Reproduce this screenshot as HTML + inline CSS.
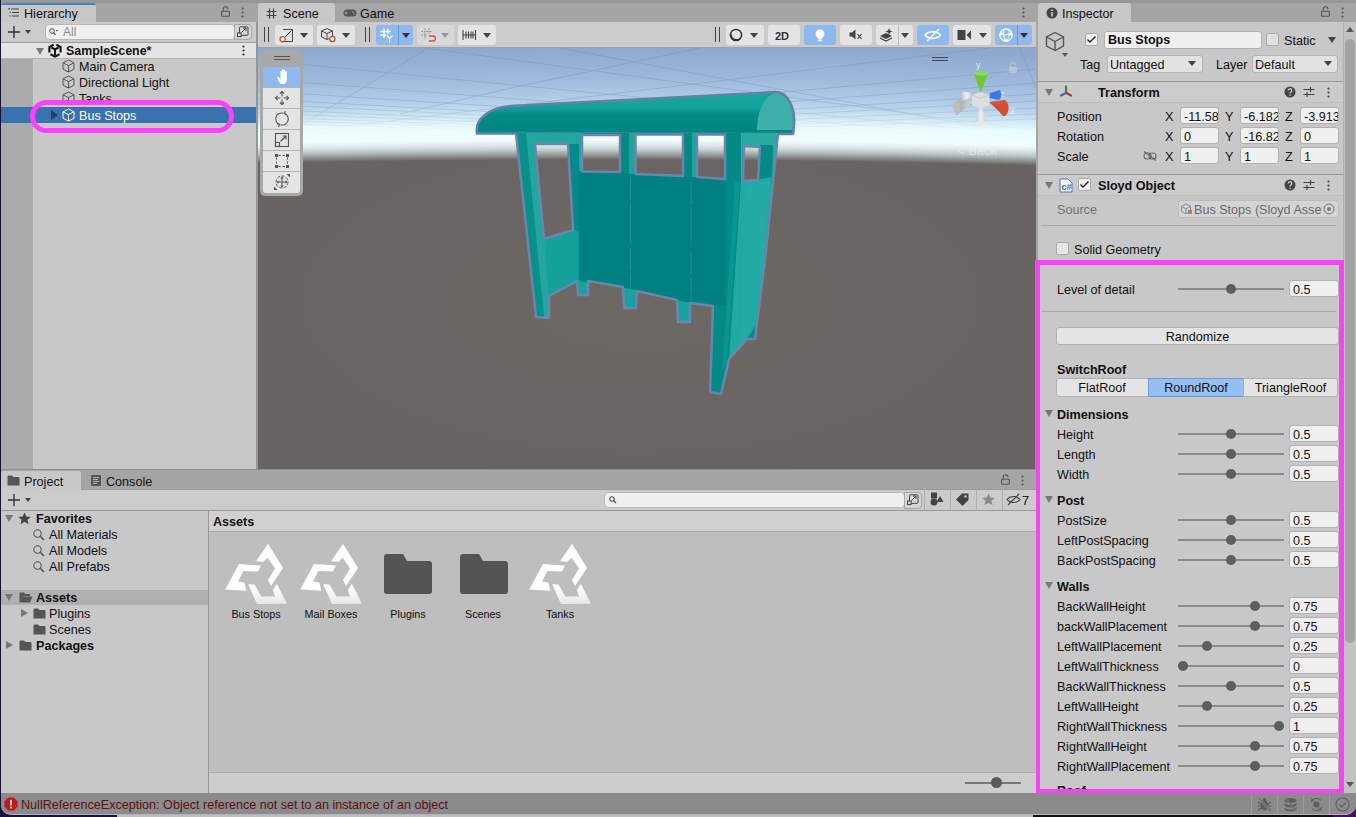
<!DOCTYPE html>
<html><head><meta charset="utf-8">
<style>
*{margin:0;padding:0;box-sizing:border-box}
html,body{width:1356px;height:817px;overflow:hidden;background:#1a1030}
body{position:relative;font-family:"Liberation Sans",sans-serif;font-size:12.6px;color:#101010}
.a{position:absolute}
.t{position:absolute;white-space:nowrap;line-height:18px;height:16px}
.b{font-weight:bold}
.fld{position:absolute;background:#f0f0f0;border:1px solid #b0b0b0;border-radius:3px;height:17px;line-height:19px;padding-left:4px;overflow:hidden;white-space:nowrap}
.btn{position:absolute;background:#e4e4e4;border-radius:3px}
.tri-d{position:absolute;width:0;height:0;border-left:5px solid transparent;border-right:5px solid transparent;border-top:7px solid #777}
.tri-r{position:absolute;width:0;height:0;border-top:5px solid transparent;border-bottom:5px solid transparent;border-left:7px solid #555}
.sl{position:absolute;height:2px;background:#8a8a8a}
.knob{position:absolute;width:10px;height:10px;border-radius:50%;background:#5e5e5e}
</style></head><body>
<!-- window frame -->
<div class="a" style="left:1px;top:0;width:1355px;height:814px;background:#a0a0a0;border-radius:0 0 10px 10px;overflow:hidden">
</div>

<!-- ============ TOP STRIP / TAB BARS ============ -->
<div class="a" style="left:1px;top:0;width:1355px;height:3px;background:#979797"></div>
<div class="a" style="left:1px;top:3px;width:1355px;height:19px;background:#a5a5a5"></div>

<!-- ============ HIERARCHY ============ -->
<div class="a" style="left:256px;top:22px;width:2px;height:447px;background:#969696"></div>
<div class="a" style="left:1px;top:22px;width:255px;height:447px;background:#c8c8c8"></div>
<!-- tab -->
<div class="a" style="left:1px;top:3px;width:95px;height:19px;background:#c8c8c8;border-radius:3px 3px 0 0;overflow:hidden"><div class="a" style="left:0;top:0;width:95px;height:2px;background:#4d7fb8"></div><div class="a" style="left:0;top:2px;width:95px;height:1px;background:#b4cbe4"></div></div>
<svg class="a" style="left:8px;top:8px" width="12" height="9" viewBox="0 0 12 9"><g stroke="#444" stroke-width="1.2"><path d="M3 1H11M4 4.5H11M4 8H11"/></g><g fill="#444"><rect x="0.5" y="0" width="1.4" height="1.6"/><rect x="1.5" y="3.8" width="1.2" height="1.2"/><rect x="1.5" y="7.3" width="1.2" height="1.2"/></g></svg>
<div class="t" style="left:24px;top:5px;font-size:12.6px">Hierarchy</div>
<svg class="a" style="left:221px;top:6px" width="9" height="11" viewBox="0 0 9 11"><path d="M2.2 5V3.2A2.4 2.4 0 0 1 7 3.2" fill="none" stroke="#555" stroke-width="1.1"/><rect x="0.6" y="5.2" width="7.8" height="5" rx="0.6" fill="none" stroke="#555" stroke-width="1.1"/></svg>
<svg class="a" style="left:241px;top:7px" width="3" height="11" viewBox="0 0 3 11"><circle cx="1.5" cy="1.5" r="1.1" fill="#555"/><circle cx="1.5" cy="5.5" r="1.1" fill="#555"/><circle cx="1.5" cy="9.5" r="1.1" fill="#555"/></svg>
<!-- toolbar -->
<div class="a" style="left:1px;top:22px;width:255px;height:20px;background:#cbcbcb"></div>
<svg class="a" style="left:8px;top:26px" width="12" height="12" viewBox="0 0 12 12"><path d="M6 0V12M0 6H12" stroke="#333" stroke-width="1.4"/></svg>
<div class="a" style="left:25px;top:30px;width:0;height:0;border-left:3.5px solid transparent;border-right:3.5px solid transparent;border-top:4px solid #444"></div>
<div class="a" style="left:45px;top:24px;width:190px;height:16px;background:#f0f0f0;border:1px solid #b8b8b8;border-radius:4px"></div>
<svg class="a" style="left:49px;top:28px" width="10" height="8" viewBox="0 0 10 8"><circle cx="3" cy="3" r="2.3" fill="none" stroke="#555" stroke-width="1"/><path d="M4.6 4.6L6.6 6.8" stroke="#555" stroke-width="1.1"/><path d="M6.6 2L9.4 2L8 3.6Z" fill="#555"/></svg>
<div class="t" style="left:63px;top:25px;color:#8a8a8a;font-size:12px;line-height:15px">All</div>
<div class="a" style="left:234px;top:24px;width:18px;height:16px;background:#d6d6d6;border:1px solid #a8a8a8;border-radius:0 4px 4px 0"></div>
<svg class="a" style="left:237px;top:26px" width="12" height="12" viewBox="0 0 12 12"><rect x="2.5" y="0.8" width="8.5" height="8.5" rx="0.8" fill="none" stroke="#444" stroke-width="1"/><rect x="0.5" y="7" width="3.6" height="3.6" fill="#d6d6d6" stroke="#444" stroke-width="1"/><path d="M4.5 6.5L9 2M6 2H9V5" fill="none" stroke="#444" stroke-width="1"/></svg>
<div class="a" style="left:1px;top:42px;width:255px;height:1px;background:#9c9c9c"></div>
<!-- scene header row -->
<div class="a" style="left:1px;top:43px;width:255px;height:15px;background:#e4e4e4"></div>
<div class="a" style="left:36px;top:48px;width:0;height:0;border-left:4px solid transparent;border-right:4px solid transparent;border-top:7px solid #7a7a7a"></div>
<svg class="a" style="left:44px;top:42px" width="22" height="18" viewBox="0 0 22 18"><g fill="none" stroke="#111" stroke-width="2.1" stroke-linejoin="miter"><path d="M9.6 2.6L5.4 5V10.6"/><path d="M12.4 2.6L16.6 5V10.6"/><path d="M7.4 5.4L11 7.5L14.6 5.4M11 7.5V13.2"/><path d="M6.5 12.2L11 14.6L15.5 12.2"/></g></svg>
<div class="t b" style="left:66px;top:44px;font-size:12.4px;line-height:15px">SampleScene*</div>
<svg class="a" style="left:242px;top:45px" width="3" height="11" viewBox="0 0 3 11"><circle cx="1.5" cy="1.5" r="1.1" fill="#333"/><circle cx="1.5" cy="5.5" r="1.1" fill="#333"/><circle cx="1.5" cy="9.5" r="1.1" fill="#333"/></svg>
<!-- left column -->
<div class="a" style="left:1px;top:58px;width:32px;height:411px;background:#ababab"></div><div class="a" style="left:33px;top:58px;width:1px;height:411px;background:#cbcbcb"></div><div class="a" style="left:1px;top:58px;width:255px;height:1px;background:#b4b4b4"></div>
<!-- rows -->
<svg class="a" style="left:62px;top:59px" width="13" height="14" viewBox="0 0 13 14"><g fill="none" stroke="#555" stroke-width="1"><path d="M6.5 1L12 3.8V10.2L6.5 13L1 10.2V3.8Z"/><path d="M6.5 6.6V13M6.5 6.6L12 3.8M6.5 6.6L1 3.8"/></g></svg>
<div class="t" style="left:79px;top:58px">Main Camera</div>
<svg class="a" style="left:62px;top:75px" width="13" height="14" viewBox="0 0 13 14"><g fill="none" stroke="#555" stroke-width="1"><path d="M6.5 1L12 3.8V10.2L6.5 13L1 10.2V3.8Z"/><path d="M6.5 6.6V13M6.5 6.6L12 3.8M6.5 6.6L1 3.8"/></g></svg>
<div class="t" style="left:79px;top:74px">Directional Light</div>
<svg class="a" style="left:62px;top:91px" width="13" height="14" viewBox="0 0 13 14"><g fill="none" stroke="#555" stroke-width="1"><path d="M6.5 1L12 3.8V10.2L6.5 13L1 10.2V3.8Z"/><path d="M6.5 6.6V13M6.5 6.6L12 3.8M6.5 6.6L1 3.8"/></g></svg>
<div class="t" style="left:79px;top:90px">Tanks</div>
<!-- selected -->
<div class="a" style="left:1px;top:107px;width:255px;height:16px;background:#3a72b0"></div>
<div class="a" style="left:51px;top:110px;width:0;height:0;border-top:5px solid transparent;border-bottom:5px solid transparent;border-left:7px solid #1f3f66"></div>
<svg class="a" style="left:62px;top:108px" width="13" height="14" viewBox="0 0 13 14"><g fill="none" stroke="#fff" stroke-width="1"><path d="M6.5 1L12 3.8V10.2L6.5 13L1 10.2V3.8Z"/><path d="M6.5 6.6V13M6.5 6.6L12 3.8M6.5 6.6L1 3.8"/></g></svg>
<div class="t" style="left:79px;top:107px;color:#fff">Bus Stops</div>
<!-- magenta ellipse -->
<div class="a" style="left:30px;top:100px;width:204px;height:33px;border:5.5px solid #fc40fc;border-radius:17px"></div>

<!-- ============ SCENE ============ -->
<div class="a" style="left:258px;top:3px;width:77px;height:19px;background:#c8c8c8;border-radius:3px 3px 0 0"></div>
<svg class="a" style="left:266px;top:8px" width="11" height="11" viewBox="0 0 11 11"><path d="M3.5 0.5V10.5M7.5 0.5V10.5M0.5 3.5H10.5M0.5 7.5H10.5" stroke="#444" stroke-width="1.2"/></svg>
<div class="t" style="left:283px;top:5px">Scene</div>
<svg class="a" style="left:343px;top:9px" width="14" height="8" viewBox="0 0 14 8"><rect x="0.5" y="0.5" width="13" height="7" rx="3.5" fill="#555"/><path d="M3 2.5V5.5M1.5 4H4.5" stroke="#a5a5a5" stroke-width="1"/><circle cx="10" cy="3" r="0.8" fill="#a5a5a5"/><circle cx="11" cy="5" r="0.8" fill="#a5a5a5"/></svg>
<div class="t" style="left:360px;top:5px">Game</div>
<svg class="a" style="left:1022px;top:7px" width="3" height="11" viewBox="0 0 3 11"><circle cx="1.5" cy="1.5" r="1.1" fill="#555"/><circle cx="1.5" cy="5.5" r="1.1" fill="#555"/><circle cx="1.5" cy="9.5" r="1.1" fill="#555"/></svg>
<!-- toolbar -->
<div class="a" style="left:258px;top:22px;width:778px;height:25px;background:#cbcbcb"></div>
<div class="a" style="left:264px;top:27px;width:1.3px;height:15px;background:#444"></div>
<div class="a" style="left:268px;top:27px;width:1.3px;height:15px;background:#444"></div>
<div class="btn" style="left:275px;top:25px;width:38px;height:20px"></div>
<svg class="a" style="left:279px;top:28px" width="15" height="15" viewBox="0 0 15 15"><path d="M4 1.5H13.5V13.5H4.5" fill="none" stroke="#444" stroke-width="1"/><path d="M6 9L12.5 2.5" stroke="#444" stroke-width="1"/><circle cx="3.6" cy="11.2" r="2.6" fill="#fff" stroke="#c42" stroke-width="1.2"/></svg>
<div class="a" style="left:300px;top:33px;width:0;height:0;border-left:4px solid transparent;border-right:4px solid transparent;border-top:5px solid #444"></div>
<div class="btn" style="left:317px;top:25px;width:38px;height:20px"></div>
<svg class="a" style="left:320px;top:27px" width="16" height="16" viewBox="0 0 16 16"><g fill="none" stroke="#444" stroke-width="1"><path d="M7 1.5L12.5 4V10L7 12.5L1.5 10V4Z"/><path d="M7 6.5V12.5M7 6.5L12.5 4M7 6.5L1.5 4"/></g><circle cx="12.3" cy="12" r="2.6" fill="#fff" stroke="#c42" stroke-width="1.2"/></svg>
<div class="a" style="left:342px;top:33px;width:0;height:0;border-left:4px solid transparent;border-right:4px solid transparent;border-top:5px solid #444"></div>
<div class="a" style="left:365px;top:27px;width:1.3px;height:15px;background:#444"></div>
<div class="a" style="left:369px;top:27px;width:1.3px;height:15px;background:#444"></div>
<div class="btn" style="left:376px;top:25px;width:37px;height:20px;background:#8fb8ee"></div>
<div class="a" style="left:398px;top:25px;width:1px;height:20px;background:#6f98cf"></div>
<svg class="a" style="left:380px;top:28px" width="14" height="15" viewBox="0 0 14 15"><g stroke="#fff" stroke-width="1.3" fill="none"><path d="M4 0.5V10M8 0.5V6M0.5 3.5H11M0.5 7H6"/><path d="M7 7.5L9.5 10.5L12.5 7.5M9.5 10.5V14.5"/></g></svg>
<div class="a" style="left:402px;top:33px;width:0;height:0;border-left:4px solid transparent;border-right:4px solid transparent;border-top:5px solid #333"></div>
<div class="btn" style="left:417px;top:25px;width:37px;height:20px;background:#d8d8d8"></div>
<svg class="a" style="left:421px;top:28px" width="15" height="15" viewBox="0 0 15 15"><g stroke="#888" stroke-width="1.1" fill="none" stroke-dasharray="1.5 1"><path d="M4 0.5V11M8 0.5V6M0.5 3.5H11M0.5 7H6"/></g><path d="M8 8H12A2 2 0 0 1 12 13H8" fill="none" stroke="#c54" stroke-width="1.3"/></svg>
<div class="a" style="left:441px;top:33px;width:0;height:0;border-left:4px solid transparent;border-right:4px solid transparent;border-top:5px solid #999"></div>
<div class="btn" style="left:458px;top:25px;width:38px;height:20px"></div>
<svg class="a" style="left:462px;top:29px" width="15" height="12" viewBox="0 0 15 12"><g stroke="#444" stroke-width="1.1"><path d="M1 1V11M13.5 1V11M0.5 6H14"/><path d="M4 2.5V9.5M6.5 2.5V9.5M9 2.5V9.5M11 2.5V9.5"/></g></svg>
<div class="a" style="left:483px;top:33px;width:0;height:0;border-left:4px solid transparent;border-right:4px solid transparent;border-top:5px solid #444"></div>
<!-- right side buttons -->
<div class="a" style="left:715px;top:27px;width:1.3px;height:15px;background:#444"></div>
<div class="a" style="left:719px;top:27px;width:1.3px;height:15px;background:#444"></div>
<div class="btn" style="left:726px;top:25px;width:38px;height:20px"></div>
<svg class="a" style="left:729px;top:28px" width="14" height="14" viewBox="0 0 14 14"><circle cx="7" cy="7" r="5.6" fill="none" stroke="#333" stroke-width="1.5"/><path d="M1.6 8.5A5.6 5.6 0 0 0 12.4 8.2C11 11 7.5 11.6 5 10.6C3.6 10 2.4 9.4 1.6 8.5Z" fill="#333"/><path d="M1.5 6.5C1.6 9.5 4 12.3 7 12.4C4.5 11.5 3 9.5 2.8 6.5Z" fill="#333"/></svg>
<div class="a" setyle="" style="left:750px;top:33px;width:0;height:0;border-left:4px solid transparent;border-right:4px solid transparent;border-top:5px solid #444"></div>
<div class="btn" style="left:768px;top:25px;width:32px;height:20px"></div>
<div class="t b" style="left:775px;top:27px;font-size:11px;color:#333">2D</div>
<div class="btn" style="left:804px;top:25px;width:32px;height:20px;background:#8fb8ee"></div>
<svg class="a" style="left:815px;top:29px" width="10" height="13" viewBox="0 0 10 13"><path d="M5 0.5A4.3 4.3 0 0 1 7.6 8.3V9.8H2.4V8.3A4.3 4.3 0 0 1 5 0.5Z" fill="#fff"/><rect x="2.8" y="10.6" width="4.4" height="1.6" rx="0.6" fill="#fff"/></svg>
<div class="btn" style="left:840px;top:25px;width:32px;height:20px"></div>
<svg class="a" style="left:849px;top:29px" width="14" height="12" viewBox="0 0 14 12"><path d="M0.5 3.5H3L6.5 0.5V10.5L3 7.5H0.5Z" fill="#444"/><path d="M8.5 5L12.5 10M12.5 5L8.5 10" stroke="#444" stroke-width="1.2"/></svg>
<div class="btn" style="left:876px;top:25px;width:37px;height:20px"></div>
<div class="a" style="left:898px;top:25px;width:1px;height:20px;background:#bbb"></div>
<svg class="a" style="left:879px;top:27px" width="15" height="15" viewBox="0 0 15 15"><path d="M1 9L7 6L13 9L7 12Z" fill="#444"/><path d="M1 11L7 14L13 11" fill="none" stroke="#444" stroke-width="1.3"/><path d="M10 1L11 3.5L13.5 4.5L11 5.5L10 8L9 5.5L6.5 4.5L9 3.5Z" fill="#444"/></svg>
<div class="a" style="left:901px;top:33px;width:0;height:0;border-left:4px solid transparent;border-right:4px solid transparent;border-top:5px solid #444"></div>
<div class="btn" style="left:917px;top:25px;width:32px;height:20px;background:#8fb8ee"></div>
<svg class="a" style="left:924px;top:28px" width="18" height="14" viewBox="0 0 18 14"><path d="M1 7C4 2.5 13 2.5 16.5 7C13 11.5 4 11.5 1 7Z" fill="none" stroke="#fff" stroke-width="1.5"/><path d="M3 13L15 1" stroke="#fff" stroke-width="1.5"/></svg>
<div class="btn" style="left:953px;top:25px;width:38px;height:20px"></div>
<svg class="a" style="left:957px;top:29px" width="15" height="12" viewBox="0 0 15 12"><rect x="0.5" y="1" width="8" height="10" fill="#444"/><path d="M9.5 6L14 1.5V10.5Z" fill="#444"/></svg>
<div class="a" style="left:979px;top:33px;width:0;height:0;border-left:4px solid transparent;border-right:4px solid transparent;border-top:5px solid #444"></div>
<div class="btn" style="left:995px;top:25px;width:37px;height:20px;background:#8fb8ee"></div>
<div class="a" style="left:1017px;top:25px;width:1px;height:20px;background:#6f98cf"></div>
<svg class="a" style="left:998px;top:27px" width="16" height="16" viewBox="0 0 16 16"><g fill="none" stroke="#fff" stroke-width="1.3"><circle cx="8" cy="8" r="6.2"/><path d="M2.5 6.5C5 8 11 8 13.5 6.5"/><path d="M6.5 1.8C4.5 5 5 11 8.5 14.2"/><path d="M9.5 1.8C12 5 12 10 8.5 14.2" opacity="0.6"/></g><circle cx="3.2" cy="6.8" r="1.5" fill="#fff"/><circle cx="12.8" cy="6.8" r="1.5" fill="#fff"/><circle cx="8.3" cy="13.6" r="1.5" fill="#fff"/></svg>
<div class="a" style="left:1020px;top:33px;width:0;height:0;border-left:4px solid transparent;border-right:4px solid transparent;border-top:5px solid #333"></div>

<!-- scene view -->
<div class="a" style="left:258px;top:48px;width:778px;height:421px;overflow:hidden;background:#6a6562">
  <svg class="a" style="left:0;top:0" width="778" height="421" viewBox="258 48 778 421">
    <defs>
      <linearGradient id="sky" x1="0" y1="48" x2="0" y2="159.5" gradientUnits="userSpaceOnUse">
        <stop offset="0" stop-color="#8da9cf"/>
        <stop offset="0.287" stop-color="#9fbadd"/>
        <stop offset="0.511" stop-color="#b8d3ec"/>
        <stop offset="0.628" stop-color="#d4ecf6"/>
        <stop offset="0.70" stop-color="#eafcfd"/>
        <stop offset="0.825" stop-color="#f2fefe"/>
        <stop offset="0.87" stop-color="#dde9ea"/>
        <stop offset="0.915" stop-color="#bfcacb"/>
        <stop offset="0.95" stop-color="#9da3a4"/>
        <stop offset="0.982" stop-color="#7f7d7d"/>
        <stop offset="1" stop-color="#6c6664"/>
      </linearGradient>
      <linearGradient id="gfade" x1="0" y1="48" x2="0" y2="140" gradientUnits="userSpaceOnUse"><stop offset="0" stop-color="#fff"/><stop offset="0.6" stop-color="#fff"/><stop offset="0.92" stop-color="#000"/></linearGradient>
      <mask id="gmask" maskUnits="userSpaceOnUse" x="258" y="48" width="778" height="120"><rect x="258" y="48" width="778" height="120" fill="url(#gfade)"/></mask>
      <radialGradient id="gnd" cx="640" cy="300" r="420" gradientUnits="userSpaceOnUse" gradientTransform="translate(640 300) scale(1 0.45) translate(-640 -300)">
        <stop offset="0" stop-color="#6e6865"/>
        <stop offset="1" stop-color="#686361"/>
      </radialGradient>
    </defs>
    <rect x="258" y="150" width="778" height="319" fill="url(#gnd)"/>
    <g>
<rect x="258" y="20" width="9" height="139.5" fill="url(#sky)" transform="translate(0 3.43)"/>
<rect x="266" y="20" width="9" height="139.5" fill="url(#sky)" transform="translate(0 3.27)"/>
<rect x="274" y="20" width="9" height="139.5" fill="url(#sky)" transform="translate(0 3.11)"/>
<rect x="282" y="20" width="9" height="139.5" fill="url(#sky)" transform="translate(0 2.96)"/>
<rect x="290" y="20" width="9" height="139.5" fill="url(#sky)" transform="translate(0 2.81)"/>
<rect x="298" y="20" width="9" height="139.5" fill="url(#sky)" transform="translate(0 2.66)"/>
<rect x="306" y="20" width="9" height="139.5" fill="url(#sky)" transform="translate(0 2.52)"/>
<rect x="314" y="20" width="9" height="139.5" fill="url(#sky)" transform="translate(0 2.39)"/>
<rect x="322" y="20" width="9" height="139.5" fill="url(#sky)" transform="translate(0 2.25)"/>
<rect x="330" y="20" width="9" height="139.5" fill="url(#sky)" transform="translate(0 2.12)"/>
<rect x="338" y="20" width="9" height="139.5" fill="url(#sky)" transform="translate(0 2.00)"/>
<rect x="346" y="20" width="9" height="139.5" fill="url(#sky)" transform="translate(0 1.88)"/>
<rect x="354" y="20" width="9" height="139.5" fill="url(#sky)" transform="translate(0 1.76)"/>
<rect x="362" y="20" width="9" height="139.5" fill="url(#sky)" transform="translate(0 1.64)"/>
<rect x="370" y="20" width="9" height="139.5" fill="url(#sky)" transform="translate(0 1.53)"/>
<rect x="378" y="20" width="9" height="139.5" fill="url(#sky)" transform="translate(0 1.43)"/>
<rect x="386" y="20" width="9" height="139.5" fill="url(#sky)" transform="translate(0 1.32)"/>
<rect x="394" y="20" width="9" height="139.5" fill="url(#sky)" transform="translate(0 1.22)"/>
<rect x="402" y="20" width="9" height="139.5" fill="url(#sky)" transform="translate(0 1.13)"/>
<rect x="410" y="20" width="9" height="139.5" fill="url(#sky)" transform="translate(0 1.04)"/>
<rect x="418" y="20" width="9" height="139.5" fill="url(#sky)" transform="translate(0 0.95)"/>
<rect x="426" y="20" width="9" height="139.5" fill="url(#sky)" transform="translate(0 0.87)"/>
<rect x="434" y="20" width="9" height="139.5" fill="url(#sky)" transform="translate(0 0.79)"/>
<rect x="442" y="20" width="9" height="139.5" fill="url(#sky)" transform="translate(0 0.71)"/>
<rect x="450" y="20" width="9" height="139.5" fill="url(#sky)" transform="translate(0 0.64)"/>
<rect x="458" y="20" width="9" height="139.5" fill="url(#sky)" transform="translate(0 0.57)"/>
<rect x="466" y="20" width="9" height="139.5" fill="url(#sky)" transform="translate(0 0.51)"/>
<rect x="474" y="20" width="9" height="139.5" fill="url(#sky)" transform="translate(0 0.45)"/>
<rect x="482" y="20" width="9" height="139.5" fill="url(#sky)" transform="translate(0 0.39)"/>
<rect x="490" y="20" width="9" height="139.5" fill="url(#sky)" transform="translate(0 0.34)"/>
<rect x="498" y="20" width="9" height="139.5" fill="url(#sky)" transform="translate(0 0.29)"/>
<rect x="506" y="20" width="9" height="139.5" fill="url(#sky)" transform="translate(0 0.24)"/>
<rect x="514" y="20" width="9" height="139.5" fill="url(#sky)" transform="translate(0 0.20)"/>
<rect x="522" y="20" width="9" height="139.5" fill="url(#sky)" transform="translate(0 0.16)"/>
<rect x="530" y="20" width="9" height="139.5" fill="url(#sky)" transform="translate(0 0.13)"/>
<rect x="538" y="20" width="9" height="139.5" fill="url(#sky)" transform="translate(0 0.10)"/>
<rect x="546" y="20" width="9" height="139.5" fill="url(#sky)" transform="translate(0 0.07)"/>
<rect x="554" y="20" width="9" height="139.5" fill="url(#sky)" transform="translate(0 0.05)"/>
<rect x="562" y="20" width="9" height="139.5" fill="url(#sky)" transform="translate(0 0.03)"/>
<rect x="570" y="20" width="9" height="139.5" fill="url(#sky)" transform="translate(0 0.02)"/>
<rect x="578" y="20" width="9" height="139.5" fill="url(#sky)" transform="translate(0 0.01)"/>
<rect x="586" y="20" width="9" height="139.5" fill="url(#sky)" transform="translate(0 0.00)"/>
<rect x="594" y="20" width="9" height="139.5" fill="url(#sky)" transform="translate(0 0.00)"/>
<rect x="602" y="20" width="9" height="139.5" fill="url(#sky)" transform="translate(0 0.00)"/>
<rect x="610" y="20" width="9" height="139.5" fill="url(#sky)" transform="translate(0 0.01)"/>
<rect x="618" y="20" width="9" height="139.5" fill="url(#sky)" transform="translate(0 0.01)"/>
<rect x="626" y="20" width="9" height="139.5" fill="url(#sky)" transform="translate(0 0.03)"/>
<rect x="634" y="20" width="9" height="139.5" fill="url(#sky)" transform="translate(0 0.04)"/>
<rect x="642" y="20" width="9" height="139.5" fill="url(#sky)" transform="translate(0 0.06)"/>
<rect x="650" y="20" width="9" height="139.5" fill="url(#sky)" transform="translate(0 0.09)"/>
<rect x="658" y="20" width="9" height="139.5" fill="url(#sky)" transform="translate(0 0.12)"/>
<rect x="666" y="20" width="9" height="139.5" fill="url(#sky)" transform="translate(0 0.15)"/>
<rect x="674" y="20" width="9" height="139.5" fill="url(#sky)" transform="translate(0 0.18)"/>
<rect x="682" y="20" width="9" height="139.5" fill="url(#sky)" transform="translate(0 0.22)"/>
<rect x="690" y="20" width="9" height="139.5" fill="url(#sky)" transform="translate(0 0.27)"/>
<rect x="698" y="20" width="9" height="139.5" fill="url(#sky)" transform="translate(0 0.31)"/>
<rect x="706" y="20" width="9" height="139.5" fill="url(#sky)" transform="translate(0 0.36)"/>
<rect x="714" y="20" width="9" height="139.5" fill="url(#sky)" transform="translate(0 0.42)"/>
<rect x="722" y="20" width="9" height="139.5" fill="url(#sky)" transform="translate(0 0.48)"/>
<rect x="730" y="20" width="9" height="139.5" fill="url(#sky)" transform="translate(0 0.54)"/>
<rect x="738" y="20" width="9" height="139.5" fill="url(#sky)" transform="translate(0 0.60)"/>
<rect x="746" y="20" width="9" height="139.5" fill="url(#sky)" transform="translate(0 0.68)"/>
<rect x="754" y="20" width="9" height="139.5" fill="url(#sky)" transform="translate(0 0.75)"/>
<rect x="762" y="20" width="9" height="139.5" fill="url(#sky)" transform="translate(0 0.83)"/>
<rect x="770" y="20" width="9" height="139.5" fill="url(#sky)" transform="translate(0 0.91)"/>
<rect x="778" y="20" width="9" height="139.5" fill="url(#sky)" transform="translate(0 0.99)"/>
<rect x="786" y="20" width="9" height="139.5" fill="url(#sky)" transform="translate(0 1.08)"/>
<rect x="794" y="20" width="9" height="139.5" fill="url(#sky)" transform="translate(0 1.18)"/>
<rect x="802" y="20" width="9" height="139.5" fill="url(#sky)" transform="translate(0 1.27)"/>
<rect x="810" y="20" width="9" height="139.5" fill="url(#sky)" transform="translate(0 1.37)"/>
<rect x="818" y="20" width="9" height="139.5" fill="url(#sky)" transform="translate(0 1.48)"/>
<rect x="826" y="20" width="9" height="139.5" fill="url(#sky)" transform="translate(0 1.59)"/>
<rect x="834" y="20" width="9" height="139.5" fill="url(#sky)" transform="translate(0 1.70)"/>
<rect x="842" y="20" width="9" height="139.5" fill="url(#sky)" transform="translate(0 1.82)"/>
<rect x="850" y="20" width="9" height="139.5" fill="url(#sky)" transform="translate(0 1.94)"/>
<rect x="858" y="20" width="9" height="139.5" fill="url(#sky)" transform="translate(0 2.06)"/>
<rect x="866" y="20" width="9" height="139.5" fill="url(#sky)" transform="translate(0 2.19)"/>
<rect x="874" y="20" width="9" height="139.5" fill="url(#sky)" transform="translate(0 2.32)"/>
<rect x="882" y="20" width="9" height="139.5" fill="url(#sky)" transform="translate(0 2.45)"/>
<rect x="890" y="20" width="9" height="139.5" fill="url(#sky)" transform="translate(0 2.59)"/>
<rect x="898" y="20" width="9" height="139.5" fill="url(#sky)" transform="translate(0 2.74)"/>
<rect x="906" y="20" width="9" height="139.5" fill="url(#sky)" transform="translate(0 2.88)"/>
<rect x="914" y="20" width="9" height="139.5" fill="url(#sky)" transform="translate(0 3.03)"/>
<rect x="922" y="20" width="9" height="139.5" fill="url(#sky)" transform="translate(0 3.19)"/>
<rect x="930" y="20" width="9" height="139.5" fill="url(#sky)" transform="translate(0 3.35)"/>
<rect x="938" y="20" width="9" height="139.5" fill="url(#sky)" transform="translate(0 3.51)"/>
<rect x="946" y="20" width="9" height="139.5" fill="url(#sky)" transform="translate(0 3.68)"/>
<rect x="954" y="20" width="9" height="139.5" fill="url(#sky)" transform="translate(0 3.84)"/>
<rect x="962" y="20" width="9" height="139.5" fill="url(#sky)" transform="translate(0 4.02)"/>
<rect x="970" y="20" width="9" height="139.5" fill="url(#sky)" transform="translate(0 4.20)"/>
<rect x="978" y="20" width="9" height="139.5" fill="url(#sky)" transform="translate(0 4.38)"/>
<rect x="986" y="20" width="9" height="139.5" fill="url(#sky)" transform="translate(0 4.56)"/>
<rect x="994" y="20" width="9" height="139.5" fill="url(#sky)" transform="translate(0 4.75)"/>
<rect x="1002" y="20" width="9" height="139.5" fill="url(#sky)" transform="translate(0 4.95)"/>
<rect x="1010" y="20" width="9" height="139.5" fill="url(#sky)" transform="translate(0 5.14)"/>
<rect x="1018" y="20" width="9" height="139.5" fill="url(#sky)" transform="translate(0 5.34)"/>
<rect x="1026" y="20" width="9" height="139.5" fill="url(#sky)" transform="translate(0 5.55)"/>
<rect x="1034" y="20" width="9" height="139.5" fill="url(#sky)" transform="translate(0 5.76)"/>
    </g>
    <g stroke="#6f86ab" stroke-width="0.8" fill="none" opacity="0.4" mask="url(#gmask)">
      <path d="M303 124L428 48"/>
      <path d="M400 114L520 86L700 48"/>
      <path d="M258 60L1180 150"/>
      <path d="M258 79L1180 150"/>
      <path d="M258 91L1180 150"/>
      <path d="M258 99L1180 150"/>
      <path d="M258 104L1180 150"/>
      <path d="M258 109L1180 150"/>
      <path d="M258 113L1180 150"/>
      <path d="M258 117L1180 150"/>
      <path d="M258 120L1180 150"/>
      <path d="M258 123L1180 150"/>
      <path d="M425 48L1180 150"/>
      <path d="M560 48L1050 140"/>
      <path d="M150 150L990 48"/>
      <path d="M150 150L1036 69"/>
      <path d="M150 150L1036 83"/>
      <path d="M150 150L1036 94"/>
      <path d="M150 150L1036 101"/>
      <path d="M150 150L1036 108"/>
      <path d="M150 150L1036 114"/>
      <path d="M150 150L1036 119"/>
      <path d="M1020 48L1036 88"/>
    </g>
    <!-- bus stop -->
    <defs>
      <linearGradient id="roofg" x1="0" y1="92" x2="0" y2="134" gradientUnits="userSpaceOnUse">
        <stop offset="0" stop-color="#1aa69f"/><stop offset="0.35" stop-color="#14a29c"/><stop offset="0.55" stop-color="#038b87"/><stop offset="1" stop-color="#008682"/>
      </linearGradient>
      <filter id="glow" x="-5%" y="-5%" width="110%" height="110%"><feGaussianBlur stdDeviation="0.45"/></filter>
    </defs>
    <g stroke-linejoin="round">
      <!-- roof -->
      <path fill="url(#roofg)" stroke="#6680a8" stroke-width="2.4" d="M477 133.5 C474 119 490 108 510 106 L775 92 C789 92 795 110 794 124 L793 134 Z"/>
      <path fill="#3fb0a9" d="M775 93 C788 93 794 110 793 124 L792.5 130 L757 130 C757 113 763 97 775 93 Z"/>
      <path fill="none" stroke="#6680a8" stroke-width="2.4" d="M775 92 C789 92 795 110 794 124 L793 134"/>
      <path fill="#058c88" fill-rule="evenodd" d="M516 133 L536 317 L549 318 L549 296 L577 281 L578 295 L588 295 L588 281 L623 287 L624 308 L636 308 L637 291 L677 300 L678 322 L690 322 L690 303 L713 306 L710 392 L721 394 L729 359 L747 339 L755 339 L757 323 L765 260 L778 133 Z M535 144 L568 144 L573 230 L544 239 Z M582 135 L620 135 L620 172 L582 171.5 Z M635.5 134.5 L683 134.5 L683 176 L635.5 174 Z M697 134.5 L725 134.5 L725 179 L697 177 Z M744 146 L760 147 L758 180 L743 181 Z"/>
      <!-- left frame light -->
      <path fill="#22a69f" fill-rule="evenodd" d="M517 133 L582 133 L582 280 L549 296 L549 317 L536 317 Z M535 144 L568 144 L573 230 L544 239 Z"/>
      <path fill="#07918b" d="M516 133 L526 133 L544 317 L536 317 Z"/>
      <path fill="#14a19b" d="M544 239 L573 230 L582 229 L582 280 L549 296 Z"/>
      <path fill="#04898a" d="M568 144 L579 144 L579 231 L573 230 Z"/>
      <!-- back wall -->
      <path fill="#008080" d="M579 171 L582 171.5 L620 172 L635.5 174 L683 176 L697 177 L725 179 L725 305 L713 306 L690 303 L637 291 L588 281 L579 280 Z"/>
      <path fill="#038884" d="M620 133 L629 133 L629 174 L620 173 Z"/>
      <path fill="#20a59e" d="M629 133 L635.5 133 L635.5 174 L629 174 Z"/>
      <path fill="#038884" d="M683 133 L692 133 L692 176.5 L683 176 Z"/>
      <path fill="#20a59e" d="M692 133 L697 133 L697 177 L692 177 Z"/>
      <path d="M630.5 178V289M691 182V302" stroke="#40aca8" stroke-width="0.8" stroke-dasharray="22 3 40 5" opacity="0.55"/>
      <!-- back legs -->
      <path fill="#16a29d" d="M578 281 L588 283 L588 295 L578 295 Z"/>
      <path fill="#16a29d" d="M624 288 L636 290 L636 308 L624 308 Z"/>
      <path fill="#16a29d" d="M678 300 L690 303 L690 322 L678 322 Z"/>
      <!-- right post -->
      <path fill="#038a86" d="M725 133 L741 133 L741 181 L729 359 L721 394 L710 392 L713 306 L725 305 Z"/>
      <path fill="#0f9a95" d="M735 181 L740 181 L727 362 L722 372 Z" opacity="0.7"/>
      <!-- right frame -->
      <path fill="#27aba4" fill-rule="evenodd" d="M741 133 L778 133 L772 190 L741 190 Z M744 146 L760 147 L758 180 L743 181 Z"/>
      <path fill="#038a86" d="M760 145 L773 145 L772 184 L758 186 Z"/>
      <path fill="#1fa9a2" d="M741 183 L772 177 L765 260 L757 323 L747 339 L729 359 Z"/>
      <path fill="#28aea7" d="M745 186 L770 180 L764 262 L757 320 L740 345 Z" opacity="0.5"/>
      <!-- outlines -->
      <path fill="none" stroke="#6a86ae" stroke-width="2.5" filter="url(#glow)" d="M516 133.5 L536 317 L549 318 L549 296 L577 281 L578 295 L588 295 L588 281 L623 287 L624 308 L636 308 L637 291 L677 300 L678 322 L690 322 L690 303 L713 306 L710 392 L721 394 L729 359 L747 339 L755 339 L757 323 L765 260 L778 133.5 M535 144 L568 144 L573 230 L544 239 Z M582 135 L620 135 L620 172 L582 171.5 Z M635.5 134.5 L683 134.5 L683 176 L635.5 174 Z M697 134.5 L725 134.5 L725 179 L697 177 Z M744 146 L760 147 L758 180 L743 181 Z"/>
    </g>
  </svg>
  <!-- tool palette -->
  <div class="a" style="left:2px;top:2px;width:43px;height:146px;background:#a8a8a8;border-radius:5px"></div>
  <div class="a" style="left:16px;top:8px;width:16px;height:1px;background:#555"></div>
  <div class="a" style="left:16px;top:11px;width:16px;height:1px;background:#555"></div>
  <div class="a" style="left:5px;top:19px;width:37px;height:126px;background:#e4e4e4;border-radius:3px"></div>
  <div class="a" style="left:5px;top:19px;width:37px;height:20px;background:#8fb8ee;border-radius:3px 3px 0 0"></div>
  <div class="a" style="left:5px;top:39px;width:37px;height:1px;background:#b4b4b4"></div>
  <div class="a" style="left:5px;top:60px;width:37px;height:1px;background:#b4b4b4"></div>
  <div class="a" style="left:5px;top:81px;width:37px;height:1px;background:#b4b4b4"></div>
  <div class="a" style="left:5px;top:102px;width:37px;height:1px;background:#b4b4b4"></div>
  <div class="a" style="left:5px;top:123px;width:37px;height:1px;background:#b4b4b4"></div>
<svg class="a" style="left:16px;top:20px" width="16" height="17" viewBox="0 0 16 17"><path d="M4.2 16 C3 14.5 1.2 11.5 0.8 10 C0.5 9 1.6 8.4 2.4 9.2 L4 11 V3.8 C4 2.8 5.5 2.8 5.5 3.8 V8.5 V1.8 C5.5 0.8 7.1 0.8 7.1 1.8 V8.5 V2.4 C7.1 1.4 8.7 1.4 8.7 2.4 V8.7 V3.8 C8.7 2.8 10.3 2.8 10.3 3.8 V11.5 C10.3 14 9 16 7 16 Z" fill="#fff" transform="translate(2.5 0)"/></svg>
  <svg class="a" style="left:16px;top:42px" width="16" height="16" viewBox="0 0 16 16"><g stroke="#555" stroke-width="1.1" fill="none"><path d="M8 1.5V6.5M8 9.5V14.5M1.5 8H6.5M9.5 8H14.5"/><path d="M6 3.5L8 1.5L10 3.5M6 12.5L8 14.5L10 12.5M3.5 6L1.5 8L3.5 10M12.5 6L14.5 8L12.5 10"/></g></svg>
  <svg class="a" style="left:16px;top:63px" width="16" height="16" viewBox="0 0 16 16"><g fill="none" stroke="#555" stroke-width="1.1"><path d="M9.5 2.2A6 6 0 0 0 5.5 13.5"/><path d="M6.5 13.8A6 6 0 0 0 10.5 2.5"/><path d="M3.2 12.2L5.5 13.6L4.6 16"/><path d="M12.8 3.8L10.5 2.4L11.4 0"/></g></svg>
  <svg class="a" style="left:16px;top:84px" width="16" height="16" viewBox="0 0 16 16"><g fill="none" stroke="#555" stroke-width="1.1"><rect x="1.5" y="1.5" width="13" height="13"/><rect x="1.5" y="10.5" width="4" height="4"/><path d="M6.5 9.5L12 4M8.5 4H12V7.5"/></g></svg>
  <svg class="a" style="left:16px;top:105px" width="16" height="16" viewBox="0 0 16 16"><g fill="none" stroke="#555" stroke-width="1" stroke-dasharray="2.2 1.8"><path d="M4.5 2.5H12M4.5 13.5H12M2.5 4.5V12M13.5 4.5V12"/></g><g fill="#555"><rect x="1" y="1" width="3" height="3"/><rect x="12" y="1" width="3" height="3"/><rect x="1" y="12" width="3" height="3"/><rect x="12" y="12" width="3" height="3"/></g></svg>
  <svg class="a" style="left:15px;top:125px" width="18" height="18" viewBox="0 0 18 18"><g fill="none" stroke="#555" stroke-width="1"><circle cx="9" cy="9" r="6" stroke-dasharray="3 1.5"/><path d="M9 4.5V13.5M4.5 9H13.5"/></g><g fill="#555"><path d="M9 3.5L10.8 5.5H7.2Z"/><path d="M9 14.5L10.8 12.5H7.2Z"/><path d="M3.5 9L5.5 7.2V10.8Z"/><path d="M14.5 9L12.5 7.2V10.8Z"/><path d="M1 17L1 13.5L4.5 17Z"/><path d="M17 1L13.5 1L17 4.5Z"/></g></svg>
  <!-- gizmo -->
  <div class="a" style="left:674px;top:9px;width:16px;height:1px;background:#444"></div>
  <div class="a" style="left:674px;top:12px;width:16px;height:1px;background:#444"></div>
  <svg class="a" style="left:680px;top:10px" width="98" height="110" viewBox="680 10 98 110">
    <defs>
      <linearGradient id="cg" x1="0" y1="0" x2="1" y2="0"><stop offset="0" stop-color="#a8a8a8"/><stop offset="1" stop-color="#d8d8d8"/></linearGradient>
      <linearGradient id="rg" x1="0" y1="0" x2="0" y2="1"><stop offset="0" stop-color="#e0583a"/><stop offset="1" stop-color="#b83a22"/></linearGradient>
      <linearGradient id="wg" x1="0" y1="0" x2="1" y2="0"><stop offset="0" stop-color="#c4c4c4"/><stop offset="0.5" stop-color="#f0f0f0"/><stop offset="1" stop-color="#c8c8c8"/></linearGradient>
    </defs>
    <g opacity="0.75"><rect x="751" y="19" width="8" height="6" rx="1" fill="#c8cdd4"/><path d="M752.5 19V17A2.5 2.5 0 0 1 757.5 17" fill="none" stroke="#c8cdd4" stroke-width="1.1"/></g>
    <text x="718" y="20" font-size="9" fill="#e4ecf4" font-family="Liberation Sans">y</text>
    <text x="742" y="49" font-size="9" fill="#e4ecf4" font-family="Liberation Sans">z</text>
    <text x="752" y="66" font-size="10" fill="#e4ecf4" font-family="Liberation Sans" opacity="0.8">x</text>
    <path d="M716 25.5 L722.6 45 L730 25.5 Z" fill="#6cc63a"/>
    <ellipse cx="723" cy="25.5" rx="7" ry="2.2" fill="#8edc55"/>
    <path d="M704 43 Q702 48 705 52 L714 50 L713 45 Z" fill="url(#wg)"/>
    <path d="M742 42 Q745 48 741 52 L731 50 L732 45 Z" fill="#3b78e0"/>
    <path d="M699 52 L715 54 L699 67 Z" fill="url(#cg)"/>
    <ellipse cx="699" cy="59.5" rx="3.5" ry="7.5" fill="#bdbdbd"/>
    <path d="M746 52 L731 54 L746 68 Z" fill="url(#rg)"/>
    <ellipse cx="746" cy="60" rx="4.5" ry="8" fill="#d5502f"/>
    <path d="M717 75 L722.6 58 L729 75 Z" fill="url(#wg)"/>
    <ellipse cx="723" cy="75" rx="6" ry="2.5" fill="#e6e6e6"/>
    <path d="M714 47 L722.5 44 L731.5 47 V57 L722.5 61 L714 57 Z" fill="#dedede"/>
    <path d="M714 47 L722.5 50 L731.5 47" fill="none" stroke="#c4c4c4" stroke-width="0.8"/>
    <text x="699" y="107" font-size="13" fill="#eef3f5" font-family="Liberation Sans" opacity="0.6">&lt; Back</text>
  </svg>
</div>

<!-- ============ INSPECTOR ============ -->
<div class="a" style="left:1036px;top:3px;width:2px;height:790px;background:#a5a5a5"></div>
<div class="a" style="left:1038px;top:22px;width:318px;height:771px;background:#c8c8c8"></div>
<div class="a" style="left:1038px;top:3px;width:93px;height:19px;background:#c8c8c8;border-radius:3px 3px 0 0"></div>
<svg class="a" style="left:1046px;top:7px" width="12" height="12" viewBox="0 0 12 12"><circle cx="6" cy="6" r="5.5" fill="#444"/><rect x="5.2" y="5" width="1.6" height="4.5" fill="#c8c8c8"/><circle cx="6" cy="3.2" r="0.9" fill="#c8c8c8"/></svg>
<div class="t" style="left:1062px;top:5px">Inspector</div>
<svg class="a" style="left:1321px;top:6px" width="9" height="11" viewBox="0 0 9 11"><path d="M2.2 5V3.2A2.4 2.4 0 0 1 7 3.2" fill="none" stroke="#555" stroke-width="1.1"/><rect x="0.6" y="5.2" width="7.8" height="5" rx="0.6" fill="none" stroke="#555" stroke-width="1.1"/></svg>
<svg class="a" style="left:1341px;top:7px" width="3" height="11" viewBox="0 0 3 11"><circle cx="1.5" cy="1.5" r="1.1" fill="#555"/><circle cx="1.5" cy="5.5" r="1.1" fill="#555"/><circle cx="1.5" cy="9.5" r="1.1" fill="#555"/></svg>
<div class="a" style="left:1343px;top:22px;width:1px;height:771px;background:#b0b0b0"></div>
<div class="a" style="left:1344px;top:22px;width:12px;height:771px;background:#c2c2c2"></div>
<div class="a" style="left:1346px;top:27px;width:0;height:0;border-left:4px solid transparent;border-right:4px solid transparent;border-bottom:5px solid #555"></div>
<div class="a" style="left:1345px;top:39px;width:10px;height:604px;background:#a3a3a3;border-radius:5px"></div>
<div class="a" style="left:1346px;top:782px;width:0;height:0;border-left:4px solid transparent;border-right:4px solid transparent;border-top:5px solid #555"></div>
<svg class="a" style="left:1045px;top:31px" width="24" height="28" viewBox="0 0 24 28"><g fill="none" stroke="#555" stroke-width="1.4"><path d="M10 1.5L18.5 6V15L10 19.5L1.5 15V6Z"/><path d="M10 10.5V19.5M10 10.5L18.5 6M10 10.5L1.5 6"/></g><path d="M17 22H23L20 26Z" fill="#555"/></svg>
<div class="a" style="left:1085px;top:33px;width:13px;height:13px;background:#f0f0f0;border:1px solid #aaa;border-radius:2px"></div>
<svg class="a" style="left:1086px;top:35px" width="11" height="9" viewBox="0 0 11 9"><path d="M1.5 4.5L4 7L9.5 1.5" fill="none" stroke="#222" stroke-width="1.4"/></svg>
<div class="fld b" style="left:1104px;top:31px;width:158px;height:18px;line-height:16px;padding-left:3px;font-size:12.6px">Bus Stops</div>
<div class="a" style="left:1266px;top:33px;width:13px;height:13px;background:#e0e0e0;border:1px solid #aaa;border-radius:2px"></div>
<div class="t" style="left:1284px;top:32px">Static</div>
<div class="a" style="left:1328px;top:37px;width:0;height:0;border-left:4.5px solid transparent;border-right:4.5px solid transparent;border-top:6px solid #444"></div>
<div class="t" style="left:1080px;top:56px">Tag</div>
<div class="btn" style="left:1107px;top:55px;width:96px;height:18px;background:#e2e2e2;border:1px solid #b4b4b4"></div>
<div class="t" style="left:1110px;top:56px">Untagged</div>
<div class="a" style="left:1188px;top:61px;width:0;height:0;border-left:4px solid transparent;border-right:4px solid transparent;border-top:5px solid #444"></div>
<div class="t" style="left:1216px;top:56px">Layer</div>
<div class="btn" style="left:1252px;top:55px;width:86px;height:18px;background:#e2e2e2;border:1px solid #b4b4b4"></div>
<div class="t" style="left:1255px;top:56px">Default</div>
<div class="a" style="left:1324px;top:61px;width:0;height:0;border-left:4px solid transparent;border-right:4px solid transparent;border-top:5px solid #444"></div>
<div class="a" style="left:1038px;top:81px;width:305px;height:1px;background:#999"></div>
<div class="a" style="left:1038px;top:82px;width:305px;height:20px;background:#cbcbcb"></div>
<div class="a" style="left:1038px;top:102px;width:305px;height:1px;background:#bdbdbd"></div>
<div class="a" style="left:1045px;top:89px;width:0;height:0;border-left:4.5px solid transparent;border-right:4.5px solid transparent;border-top:7px solid #777"></div>
<svg class="a" style="left:1059px;top:85px" width="14" height="14" viewBox="0 0 14 14"><path d="M7 7V1.5" stroke="#2e8a3a" stroke-width="2.2" stroke-linecap="round"/><path d="M7 8L2 10.5" stroke="#2d6fd0" stroke-width="2.2" stroke-linecap="round"/><path d="M7.5 8L12 10.5" stroke="#c82a2a" stroke-width="2.2" stroke-linecap="round"/></svg>
<div class="t b" style="left:1098px;top:84px">Transform</div>
<svg class="a" style="left:1284px;top:86px" width="12" height="12" viewBox="0 0 12 12"><circle cx="6" cy="6" r="5.5" fill="#444"/><path d="M4.2 4.6A1.8 1.8 0 1 1 6.8 6.2C6.2 6.6 6 6.9 6 7.6" fill="none" stroke="#cfcfcf" stroke-width="1.3"/><circle cx="6" cy="9.3" r="0.8" fill="#cfcfcf"/></svg>
<svg class="a" style="left:1303px;top:86px" width="12" height="12" viewBox="0 0 12 12"><g stroke="#444" stroke-width="1.2"><path d="M0.5 3.5H11.5M0.5 8.5H11.5"/><path d="M7.5 1V6M4 6V11"/></g></svg>
<svg class="a" style="left:1327px;top:87px" width="3" height="11" viewBox="0 0 3 11"><circle cx="1.5" cy="1.5" r="1.1" fill="#444"/><circle cx="1.5" cy="5.5" r="1.1" fill="#444"/><circle cx="1.5" cy="9.5" r="1.1" fill="#444"/></svg>
<div class="t" style="left:1057px;top:108px">Position</div>
<div class="t" style="left:1165px;top:108px">X</div>
<div class="fld" style="left:1180px;top:107px;width:39px;height:17px;padding-left:3px">-11.58</div>
<div class="t" style="left:1225px;top:108px">Y</div>
<div class="fld" style="left:1240px;top:107px;width:39px;height:17px;padding-left:3px">-6.182</div>
<div class="t" style="left:1285px;top:108px">Z</div>
<div class="fld" style="left:1300px;top:107px;width:39px;height:17px;padding-left:3px">-3.913</div>
<div class="t" style="left:1057px;top:128px">Rotation</div>
<div class="t" style="left:1165px;top:128px">X</div>
<div class="fld" style="left:1180px;top:127px;width:39px;height:17px;padding-left:3px">0</div>
<div class="t" style="left:1225px;top:128px">Y</div>
<div class="fld" style="left:1240px;top:127px;width:39px;height:17px;padding-left:3px">-16.82</div>
<div class="t" style="left:1285px;top:128px">Z</div>
<div class="fld" style="left:1300px;top:127px;width:39px;height:17px;padding-left:3px">0</div>
<div class="t" style="left:1057px;top:148px">Scale</div>
<svg class="a" style="left:1143px;top:151px" width="14" height="10" viewBox="0 0 14 10"><g fill="none" stroke="#666" stroke-width="1.1"><rect x="1" y="2" width="7" height="6" rx="3"/><rect x="6" y="2" width="7" height="6" rx="3"/><path d="M1 0.5L13 9.5"/></g></svg>
<div class="t" style="left:1165px;top:148px">X</div>
<div class="fld" style="left:1180px;top:147px;width:39px;height:17px;padding-left:3px">1</div>
<div class="t" style="left:1225px;top:148px">Y</div>
<div class="fld" style="left:1240px;top:147px;width:39px;height:17px;padding-left:3px">1</div>
<div class="t" style="left:1285px;top:148px">Z</div>
<div class="fld" style="left:1300px;top:147px;width:39px;height:17px;padding-left:3px">1</div>
<div class="a" style="left:1038px;top:174px;width:305px;height:1px;background:#999"></div>
<div class="a" style="left:1038px;top:175px;width:305px;height:20px;background:#cbcbcb"></div>
<div class="a" style="left:1038px;top:195px;width:305px;height:1px;background:#bdbdbd"></div>
<div class="a" style="left:1045px;top:182px;width:0;height:0;border-left:4.5px solid transparent;border-right:4.5px solid transparent;border-top:7px solid #777"></div>
<svg class="a" style="left:1059px;top:178px" width="14" height="15" viewBox="0 0 14 15"><path d="M1 1H9L13 5V14H1Z" fill="#f4f4f4" stroke="#4a7ab8" stroke-width="1"/><text x="2.5" y="12" font-size="9" font-weight="bold" fill="#3a6ab0" font-family="Liberation Sans">c#</text></svg>
<div class="a" style="left:1078px;top:178px;width:13px;height:13px;background:#f0f0f0;border:1px solid #aaa;border-radius:2px"></div>
<svg class="a" style="left:1079px;top:180px" width="11" height="9" viewBox="0 0 11 9"><path d="M1.5 4.5L4 7L9.5 1.5" fill="none" stroke="#222" stroke-width="1.4"/></svg>
<div class="t b" style="left:1098px;top:177px">Sloyd Object</div>
<svg class="a" style="left:1284px;top:179px" width="12" height="12" viewBox="0 0 12 12"><circle cx="6" cy="6" r="5.5" fill="#444"/><path d="M4.2 4.6A1.8 1.8 0 1 1 6.8 6.2C6.2 6.6 6 6.9 6 7.6" fill="none" stroke="#cfcfcf" stroke-width="1.3"/><circle cx="6" cy="9.3" r="0.8" fill="#cfcfcf"/></svg>
<svg class="a" style="left:1303px;top:179px" width="12" height="12" viewBox="0 0 12 12"><g stroke="#444" stroke-width="1.2"><path d="M0.5 3.5H11.5M0.5 8.5H11.5"/><path d="M7.5 1V6M4 6V11"/></g></svg>
<svg class="a" style="left:1327px;top:180px" width="3" height="11" viewBox="0 0 3 11"><circle cx="1.5" cy="1.5" r="1.1" fill="#444"/><circle cx="1.5" cy="5.5" r="1.1" fill="#444"/><circle cx="1.5" cy="9.5" r="1.1" fill="#444"/></svg>
<div class="t" style="left:1057px;top:201px;color:#707070">Source</div>
<div class="a" style="left:1178px;top:200px;width:161px;height:18px;background:#d4d4d4;border:1px solid #bcbcbc;border-radius:3px"></div>
<svg class="a" style="left:1181px;top:203px" width="12" height="12" viewBox="0 0 12 12"><g fill="none" stroke="#7a90b0" stroke-width="1"><path d="M5 1L9.5 3.3V8.5L5 10.8L0.5 8.5V3.3Z"/><path d="M5 6V10.8M5 6L9.5 3.3M5 6L0.5 3.3"/></g><rect x="7" y="7" width="4" height="4" fill="#c87070"/></svg>
<div class="t" style="left:1194px;top:201px;color:#6a6a6a;width:128px;overflow:hidden">Bus Stops (Sloyd Asset)</div>
<svg class="a" style="left:1323px;top:203px" width="12" height="12" viewBox="0 0 12 12"><circle cx="6" cy="6" r="5" fill="none" stroke="#777" stroke-width="1"/><circle cx="6" cy="6" r="2" fill="#777"/></svg>
<div class="a" style="left:1041px;top:225px;width:295px;height:1px;background:#a8a8a8"></div>
<div class="a" style="left:1056px;top:242px;width:13px;height:13px;background:#e6e6e6;border:1px solid #aaa;border-radius:2px"></div>
<div class="t" style="left:1074px;top:241px">Solid Geometry</div>
<div class="t" style="left:1057px;top:281px">Level of detail</div>
<div class="sl" style="left:1178px;top:288px;width:106px"></div>
<div class="knob" style="left:1226.0px;top:284px"></div>
<div class="fld" style="left:1289px;top:280px;width:50px;height:17px;padding-left:3px">0.5</div>
<div class="a" style="left:1041px;top:311px;width:295px;height:1px;background:#a8a8a8"></div>
<div class="btn" style="left:1056px;top:327px;width:283px;height:18px;background:#e4e4e4;border:1px solid #b0b0b0"></div>
<div class="t" style="left:1056px;top:328px;width:283px;text-align:center">Randomize</div>
<div class="t b" style="left:1057px;top:361px">SwitchRoof</div>
<div class="a" style="left:1056px;top:378px;width:282px;height:19px;background:#e4e4e4;border:1px solid #b0b0b0;border-radius:3px"></div>
<div class="a" style="left:1148px;top:378px;width:96px;height:19px;background:#96bff4;border:1px solid #6c9bd8"></div>
<div class="a" style="left:1243px;top:378px;width:1px;height:19px;background:#b0b0b0"></div>
<div class="t" style="left:1056px;top:379px;width:92px;text-align:center">FlatRoof</div>
<div class="t" style="left:1148px;top:379px;width:96px;text-align:center">RoundRoof</div>
<div class="t" style="left:1243px;top:379px;width:95px;text-align:center">TriangleRoof</div>
<div class="a" style="left:1045px;top:410px;width:0;height:0;border-left:4.5px solid transparent;border-right:4.5px solid transparent;border-top:7px solid #777"></div>
<div class="t b" style="left:1057px;top:406px">Dimensions</div>
<div class="t" style="left:1057px;top:426px">Height</div>
<div class="sl" style="left:1178px;top:433px;width:106px"></div>
<div class="knob" style="left:1226.0px;top:429px"></div>
<div class="fld" style="left:1289px;top:425px;width:50px;height:17px;padding-left:3px">0.5</div>
<div class="t" style="left:1057px;top:446px">Length</div>
<div class="sl" style="left:1178px;top:453px;width:106px"></div>
<div class="knob" style="left:1226.0px;top:449px"></div>
<div class="fld" style="left:1289px;top:445px;width:50px;height:17px;padding-left:3px">0.5</div>
<div class="t" style="left:1057px;top:466px">Width</div>
<div class="sl" style="left:1178px;top:473px;width:106px"></div>
<div class="knob" style="left:1226.0px;top:469px"></div>
<div class="fld" style="left:1289px;top:465px;width:50px;height:17px;padding-left:3px">0.5</div>
<div class="a" style="left:1045px;top:496px;width:0;height:0;border-left:4.5px solid transparent;border-right:4.5px solid transparent;border-top:7px solid #777"></div>
<div class="t b" style="left:1057px;top:492px">Post</div>
<div class="t" style="left:1057px;top:512px">PostSize</div>
<div class="sl" style="left:1178px;top:519px;width:106px"></div>
<div class="knob" style="left:1226.0px;top:515px"></div>
<div class="fld" style="left:1289px;top:511px;width:50px;height:17px;padding-left:3px">0.5</div>
<div class="t" style="left:1057px;top:532px">LeftPostSpacing</div>
<div class="sl" style="left:1178px;top:539px;width:106px"></div>
<div class="knob" style="left:1226.0px;top:535px"></div>
<div class="fld" style="left:1289px;top:531px;width:50px;height:17px;padding-left:3px">0.5</div>
<div class="t" style="left:1057px;top:552px">BackPostSpacing</div>
<div class="sl" style="left:1178px;top:559px;width:106px"></div>
<div class="knob" style="left:1226.0px;top:555px"></div>
<div class="fld" style="left:1289px;top:551px;width:50px;height:17px;padding-left:3px">0.5</div>
<div class="a" style="left:1045px;top:582px;width:0;height:0;border-left:4.5px solid transparent;border-right:4.5px solid transparent;border-top:7px solid #777"></div>
<div class="t b" style="left:1057px;top:578px">Walls</div>
<div class="t" style="left:1057px;top:598px">BackWallHeight</div>
<div class="sl" style="left:1178px;top:605px;width:106px"></div>
<div class="knob" style="left:1250.0px;top:601px"></div>
<div class="fld" style="left:1289px;top:597px;width:50px;height:17px;padding-left:3px">0.75</div>
<div class="t" style="left:1057px;top:618px">backWallPlacement</div>
<div class="sl" style="left:1178px;top:625px;width:106px"></div>
<div class="knob" style="left:1250.0px;top:621px"></div>
<div class="fld" style="left:1289px;top:617px;width:50px;height:17px;padding-left:3px">0.75</div>
<div class="t" style="left:1057px;top:638px">LeftWallPlacement</div>
<div class="sl" style="left:1178px;top:645px;width:106px"></div>
<div class="knob" style="left:1202.0px;top:641px"></div>
<div class="fld" style="left:1289px;top:637px;width:50px;height:17px;padding-left:3px">0.25</div>
<div class="t" style="left:1057px;top:658px">LeftWallThickness</div>
<div class="sl" style="left:1178px;top:665px;width:106px"></div>
<div class="knob" style="left:1178.0px;top:661px"></div>
<div class="fld" style="left:1289px;top:657px;width:50px;height:17px;padding-left:3px">0</div>
<div class="t" style="left:1057px;top:678px">BackWallThickness</div>
<div class="sl" style="left:1178px;top:685px;width:106px"></div>
<div class="knob" style="left:1226.0px;top:681px"></div>
<div class="fld" style="left:1289px;top:677px;width:50px;height:17px;padding-left:3px">0.5</div>
<div class="t" style="left:1057px;top:698px">LeftWallHeight</div>
<div class="sl" style="left:1178px;top:705px;width:106px"></div>
<div class="knob" style="left:1202.0px;top:701px"></div>
<div class="fld" style="left:1289px;top:697px;width:50px;height:17px;padding-left:3px">0.25</div>
<div class="t" style="left:1057px;top:718px">RightWallThickness</div>
<div class="sl" style="left:1178px;top:725px;width:106px"></div>
<div class="knob" style="left:1274.0px;top:721px"></div>
<div class="fld" style="left:1289px;top:717px;width:50px;height:17px;padding-left:3px">1</div>
<div class="t" style="left:1057px;top:738px">RightWallHeight</div>
<div class="sl" style="left:1178px;top:745px;width:106px"></div>
<div class="knob" style="left:1250.0px;top:741px"></div>
<div class="fld" style="left:1289px;top:737px;width:50px;height:17px;padding-left:3px">0.75</div>
<div class="t" style="left:1057px;top:758px">RightWallPlacement</div>
<div class="sl" style="left:1178px;top:765px;width:106px"></div>
<div class="knob" style="left:1250.0px;top:761px"></div>
<div class="fld" style="left:1289px;top:757px;width:50px;height:17px;padding-left:3px">0.75</div>
<div class="t b" style="left:1057px;top:782px;height:10px;overflow:hidden">Roof</div>
<div class="a" style="left:1035px;top:260px;width:309px;height:534px;border:5px solid #fc40fc"></div>
<!-- ============ PROJECT ============ -->
<div class="a" style="left:1px;top:469px;width:1035px;height:1px;background:#a5a5a5"></div>
<div class="a" style="left:1px;top:470px;width:1035px;height:19px;background:#a5a5a5"></div>
<div class="a" style="left:1px;top:471px;width:80px;height:18px;background:#c8c8c8;border-radius:3px 3px 0 0"></div>
<svg class="a" style="left:7px;top:475px" width="13" height="11" viewBox="0 0 13 11"><path d="M0.5 1.5A1 1 0 0 1 1.5 0.5H5L6.5 2H11.5A1 1 0 0 1 12.5 3V10.5H0.5Z" fill="#555"/></svg>
<div class="t" style="left:24px;top:473px">Project</div>
<svg class="a" style="left:91px;top:475px" width="10" height="11" viewBox="0 0 10 11"><rect x="0" y="0" width="10" height="11" rx="1" fill="#555"/><path d="M2 2.5H8M2 4.5H7M2 6.5H8M2 8.5H6" stroke="#c0c0c0" stroke-width="0.9"/></svg>
<div class="t" style="left:106px;top:473px">Console</div>
<svg class="a" style="left:1001px;top:474px" width="9" height="11" viewBox="0 0 9 11"><path d="M2.2 5V3.2A2.4 2.4 0 0 1 7 3.2" fill="none" stroke="#555" stroke-width="1.1"/><rect x="0.6" y="5.2" width="7.8" height="5" rx="0.6" fill="none" stroke="#555" stroke-width="1.1"/></svg>
<svg class="a" style="left:1021px;top:475px" width="3" height="11" viewBox="0 0 3 11"><circle cx="1.5" cy="1.5" r="1.1" fill="#555"/><circle cx="1.5" cy="5.5" r="1.1" fill="#555"/><circle cx="1.5" cy="9.5" r="1.1" fill="#555"/></svg>
<div class="a" style="left:1px;top:469px;width:1035px;height:1px;background:#8f8f8f"></div>
<!-- toolbar -->
<div class="a" style="left:1px;top:489px;width:1035px;height:21px;background:#cbcbcb"></div>
<div class="a" style="left:81px;top:489px;width:955px;height:1px;background:#9c9c9c"></div>
<svg class="a" style="left:8px;top:494px" width="12" height="12" viewBox="0 0 12 12"><path d="M6 0V12M0 6H12" stroke="#333" stroke-width="1.4"/></svg>
<div class="a" style="left:25px;top:498px;width:0;height:0;border-left:3.5px solid transparent;border-right:3.5px solid transparent;border-top:4px solid #444"></div>
<div class="a" style="left:604px;top:492px;width:301px;height:16px;background:#f0f0f0;border:1px solid #b8b8b8;border-radius:4px"></div>
<svg class="a" style="left:609px;top:496px" width="8" height="8" viewBox="0 0 8 8"><circle cx="3" cy="3" r="2.2" fill="none" stroke="#555" stroke-width="1.1"/><path d="M4.6 4.6L7 7" stroke="#555" stroke-width="1.3"/></svg>
<div class="a" style="left:904px;top:492px;width:18px;height:17px;background:#d6d6d6;border:1px solid #a8a8a8;border-radius:0 4px 4px 0"></div>
<svg class="a" style="left:907px;top:494px" width="12" height="12" viewBox="0 0 12 12"><rect x="2.5" y="0.8" width="8.5" height="8.5" rx="0.8" fill="none" stroke="#444" stroke-width="1"/><rect x="0.5" y="7" width="3.6" height="3.6" fill="#d6d6d6" stroke="#444" stroke-width="1"/><path d="M4.5 6.5L9 2M6 2H9V5" fill="none" stroke="#444" stroke-width="1"/></svg>
<div class="a" style="left:924px;top:489px;width:1px;height:21px;background:#b0b0b0"></div>
<div class="a" style="left:950px;top:489px;width:1px;height:21px;background:#b0b0b0"></div>
<div class="a" style="left:976px;top:489px;width:1px;height:21px;background:#b0b0b0"></div>
<div class="a" style="left:1002px;top:489px;width:1px;height:21px;background:#b0b0b0"></div>
<svg class="a" style="left:930px;top:492px" width="14" height="14" viewBox="0 0 14 14"><rect x="1" y="0.5" width="6" height="6" fill="#444"/><circle cx="4" cy="10" r="3.5" fill="#444"/><path d="M10 4L13.5 10H6.5Z" fill="#444"/></svg>
<svg class="a" style="left:956px;top:493px" width="13" height="13" viewBox="0 0 13 13"><path d="M6 0.5H12.5V7L6.5 13L0 6.5Z" fill="#444"/><circle cx="9.5" cy="3.5" r="1.2" fill="#cbcbcb"/></svg>
<svg class="a" style="left:982px;top:493px" width="13" height="13" viewBox="0 0 13 13"><path d="M6.5 0.5L8.3 4.6L12.8 4.9L9.4 7.8L10.5 12.3L6.5 9.8L2.5 12.3L3.6 7.8L0.2 4.9L4.7 4.6Z" fill="#8a8a8a"/></svg>
<svg class="a" style="left:1006px;top:493px" width="16" height="13" viewBox="0 0 16 13"><path d="M1 6.5C4 2.5 11 2.5 14 6.5C11 10.5 4 10.5 1 6.5Z" fill="none" stroke="#444" stroke-width="1.2"/><path d="M2 12L13 1" stroke="#444" stroke-width="1.2"/></svg>
<div class="t" style="left:1022px;top:492px">7</div>
<div class="a" style="left:1px;top:510px;width:1035px;height:1px;background:#999"></div>
<!-- left pane -->
<div class="a" style="left:1px;top:511px;width:207px;height:282px;background:#c8c8c8"></div>
<div class="a" style="left:208px;top:511px;width:1px;height:282px;background:#999"></div>
<div class="a" style="left:5px;top:515px;width:0;height:0;border-left:4.5px solid transparent;border-right:4.5px solid transparent;border-top:7px solid #777"></div>
<svg class="a" style="left:18px;top:512px" width="13" height="13" viewBox="0 0 13 13"><path d="M6.5 0.5L8.3 4.6L12.8 4.9L9.4 7.8L10.5 12.3L6.5 9.8L2.5 12.3L3.6 7.8L0.2 4.9L4.7 4.6Z" fill="#444"/></svg>
<div class="t b" style="left:36px;top:510px">Favorites</div>
<svg class="a" style="left:33px;top:529px" width="12" height="12" viewBox="0 0 12 12"><circle cx="4.5" cy="4.5" r="3.7" fill="none" stroke="#555" stroke-width="1.1"/><path d="M7.2 7.2L11 11" stroke="#555" stroke-width="1.5"/></svg>
<div class="t" style="left:49px;top:526px">All Materials</div>
<svg class="a" style="left:33px;top:545px" width="12" height="12" viewBox="0 0 12 12"><circle cx="4.5" cy="4.5" r="3.7" fill="none" stroke="#555" stroke-width="1.1"/><path d="M7.2 7.2L11 11" stroke="#555" stroke-width="1.5"/></svg>
<div class="t" style="left:49px;top:542px">All Models</div>
<svg class="a" style="left:33px;top:561px" width="12" height="12" viewBox="0 0 12 12"><circle cx="4.5" cy="4.5" r="3.7" fill="none" stroke="#555" stroke-width="1.1"/><path d="M7.2 7.2L11 11" stroke="#555" stroke-width="1.5"/></svg>
<div class="t" style="left:49px;top:558px">All Prefabs</div>
<div class="a" style="left:1px;top:590px;width:207px;height:15px;background:#b0b0b0"></div>
<div class="a" style="left:5px;top:594px;width:0;height:0;border-left:4.5px solid transparent;border-right:4.5px solid transparent;border-top:7px solid #777"></div>
<svg class="a" style="left:19px;top:592px" width="14" height="11" viewBox="0 0 14 11"><path d="M0.5 10.5V1A0.5 0.5 0 0 1 1 0.5H5L6 2H11V4H3.5L0.5 10.5Z" fill="#555"/><path d="M2.5 4.5H13.5L11 10.5H0.5Z" fill="#555"/></svg>
<div class="t b" style="left:36px;top:589px">Assets</div>
<div class="a" style="left:21px;top:609px;width:0;height:0;border-top:4.5px solid transparent;border-bottom:4.5px solid transparent;border-left:7px solid #777"></div>
<svg class="a" style="left:33px;top:608px" width="13" height="11" viewBox="0 0 13 11"><path d="M0.5 1.5A1 1 0 0 1 1.5 0.5H5L6.5 2H11.5A1 1 0 0 1 12.5 3V10.5H0.5Z" fill="#555"/></svg>
<div class="t" style="left:49px;top:605px">Plugins</div>
<svg class="a" style="left:33px;top:624px" width="13" height="11" viewBox="0 0 13 11"><path d="M0.5 1.5A1 1 0 0 1 1.5 0.5H5L6.5 2H11.5A1 1 0 0 1 12.5 3V10.5H0.5Z" fill="#555"/></svg>
<div class="t" style="left:49px;top:621px">Scenes</div>
<div class="a" style="left:6px;top:641px;width:0;height:0;border-top:4.5px solid transparent;border-bottom:4.5px solid transparent;border-left:7px solid #777"></div>
<svg class="a" style="left:19px;top:640px" width="13" height="11" viewBox="0 0 13 11"><path d="M0.5 1.5A1 1 0 0 1 1.5 0.5H5L6.5 2H11.5A1 1 0 0 1 12.5 3V10.5H0.5Z" fill="#555"/></svg>
<div class="t b" style="left:36px;top:637px">Packages</div>
<!-- right pane -->
<div class="a" style="left:209px;top:511px;width:827px;height:20px;background:#d0d0d0"></div>
<div class="a" style="left:209px;top:531px;width:827px;height:1px;background:#acacac"></div>
<div class="t b" style="left:213px;top:513px">Assets</div>
<div class="a" style="left:209px;top:532px;width:827px;height:240px;background:#bebebe"></div>
<div class="a" style="left:209px;top:772px;width:827px;height:1px;background:#acacac"></div>
<div class="a" style="left:209px;top:773px;width:827px;height:20px;background:#cdcdcd"></div>
<div class="a" style="left:965px;top:782px;width:56px;height:2px;background:#777"></div>
<div class="a" style="left:991px;top:777px;width:11px;height:11px;border-radius:50%;background:#5a5a5a"></div>

<div class="t" style="left:206px;top:605px;width:100px;text-align:center;font-size:10.8px">Bus Stops</div>
<div class="t" style="left:281px;top:605px;width:100px;text-align:center;font-size:10.8px">Mail Boxes</div>
<svg class="a" style="left:384px;top:554px" width="48" height="40" viewBox="0 0 48 40"><path d="M0 3A3 3 0 0 1 3 0H19L23 7H45A3 3 0 0 1 48 10V37A3 3 0 0 1 45 40H3A3 3 0 0 1 0 37Z" fill="#545454"/></svg>
<div class="t" style="left:358px;top:605px;width:100px;text-align:center;font-size:10.8px">Plugins</div>
<svg class="a" style="left:460px;top:554px" width="48" height="40" viewBox="0 0 48 40"><path d="M0 3A3 3 0 0 1 3 0H19L23 7H45A3 3 0 0 1 48 10V37A3 3 0 0 1 45 40H3A3 3 0 0 1 0 37Z" fill="#545454"/></svg>
<div class="t" style="left:433px;top:605px;width:100px;text-align:center;font-size:10.8px">Scenes</div>
<div class="t" style="left:510px;top:605px;width:100px;text-align:center;font-size:10.8px">Tanks</div>
<svg class="a" style="left:220px;top:538px" width="72" height="72" viewBox="0 0 817 817"><defs><linearGradient id="sg220" x1="0" y1="0" x2="0" y2="817" gradientUnits="userSpaceOnUse"><stop offset="0" stop-color="#fff"/><stop offset="0.68" stop-color="#fff"/><stop offset="0.95" stop-color="#e4e4e4"/></linearGradient></defs><g fill="url(#sg220)"><path d="M410 265L545 65L715 340L580 545L545 478L625 345L540 225L495 270Z"/><path d="M60 585L215 295L465 312L430 380L265 375L205 495L275 505L300 598Z"/><path d="M320 525L390 528L470 665L625 665L600 590L645 520L760 745L420 750Z"/></g></svg>
<svg class="a" style="left:295px;top:538px" width="72" height="72" viewBox="0 0 817 817"><defs><linearGradient id="sg295" x1="0" y1="0" x2="0" y2="817" gradientUnits="userSpaceOnUse"><stop offset="0" stop-color="#fff"/><stop offset="0.68" stop-color="#fff"/><stop offset="0.95" stop-color="#e4e4e4"/></linearGradient></defs><g fill="url(#sg295)"><path d="M410 265L545 65L715 340L580 545L545 478L625 345L540 225L495 270Z"/><path d="M60 585L215 295L465 312L430 380L265 375L205 495L275 505L300 598Z"/><path d="M320 525L390 528L470 665L625 665L600 590L645 520L760 745L420 750Z"/></g></svg>
<svg class="a" style="left:524px;top:538px" width="72" height="72" viewBox="0 0 817 817"><defs><linearGradient id="sg524" x1="0" y1="0" x2="0" y2="817" gradientUnits="userSpaceOnUse"><stop offset="0" stop-color="#fff"/><stop offset="0.68" stop-color="#fff"/><stop offset="0.95" stop-color="#e4e4e4"/></linearGradient></defs><g fill="url(#sg524)"><path d="M410 265L545 65L715 340L580 545L545 478L625 345L540 225L495 270Z"/><path d="M60 585L215 295L465 312L430 380L265 375L205 495L275 505L300 598Z"/><path d="M320 525L390 528L470 665L625 665L600 590L645 520L760 745L420 750Z"/></g></svg>
<!-- ============ STATUS ============ -->
<div class="a" style="left:0;top:814px;width:117px;height:3px;background:#1a1040"></div>
<div class="a" style="left:117px;top:814px;width:916px;height:3px;background:#bdbdbd"></div>
<div class="a" style="left:1033px;top:814px;width:300px;height:3px;background:#101014"></div>
<div class="a" style="left:1333px;top:806px;width:23px;height:11px;background:#4a0c5c"></div>
<div class="a" style="left:1px;top:793px;width:1355px;height:22px;background:#8b8b8b;border-radius:0 0 10px 10px;border-bottom:1px solid #b9b2bd"></div>
<svg class="a" style="left:4px;top:797px" width="14" height="14" viewBox="0 0 14 14"><path d="M4.2 0.5H9.8L13.5 4.2V9.8L9.8 13.5H4.2L0.5 9.8V4.2Z" fill="#c4161c"/><rect x="6.2" y="2.8" width="1.6" height="5.6" fill="#fff"/><circle cx="7" cy="10.6" r="1" fill="#fff"/></svg>
<div class="t" style="left:21px;top:796px;color:#5e1010">NullReferenceException: Object reference not set to an instance of an object</div>
<div class="a" style="left:1251px;top:795px;width:1px;height:19px;background:#9c9c9c"></div>
<div class="a" style="left:1277px;top:795px;width:1px;height:19px;background:#9c9c9c"></div>
<div class="a" style="left:1303px;top:795px;width:1px;height:19px;background:#9c9c9c"></div>
<div class="a" style="left:1329px;top:795px;width:1px;height:19px;background:#9c9c9c"></div>
<svg class="a" style="left:1257px;top:797px" width="15" height="15" viewBox="0 0 15 15"><g fill="#5e5e5e"><ellipse cx="7.5" cy="8.5" rx="4" ry="5"/><circle cx="7.5" cy="3" r="2"/></g><g stroke="#5e5e5e" stroke-width="1.2"><path d="M1 5L4 7M14 5L11 7M0.5 9H3.5M14.5 9H11.5M1 13L4 11M14 13L11 11"/></g><path d="M2 1L13 14" stroke="#8b8b8b" stroke-width="2"/><path d="M2 1L13 14" stroke="#5e5e5e" stroke-width="1"/></svg>
<svg class="a" style="left:1283px;top:797px" width="15" height="15" viewBox="0 0 15 15"><g fill="#5e5e5e"><ellipse cx="7.5" cy="3.5" rx="6" ry="2.5"/><path d="M1.5 5.5A6 2.5 0 0 0 13.5 5.5V8A6 2.5 0 0 1 1.5 8Z"/><path d="M1.5 10A6 2.5 0 0 0 13.5 10V12A6 2.5 0 0 1 1.5 12Z"/></g><path d="M3 1L13 14" stroke="#8b8b8b" stroke-width="2"/><path d="M3 1L13 14" stroke="#5e5e5e" stroke-width="1"/></svg>
<svg class="a" style="left:1309px;top:797px" width="15" height="15" viewBox="0 0 15 15"><g fill="none" stroke="#5e5e5e" stroke-width="1.1"><path d="M2 5A6 6 0 0 1 12 3.5M13 10A6 6 0 0 1 3 11.5"/></g><circle cx="7.5" cy="7.5" r="3" fill="#5e5e5e"/><path d="M2 1L13 14" stroke="#5e5e5e" stroke-width="1"/></svg>
<svg class="a" style="left:1335px;top:797px" width="15" height="15" viewBox="0 0 15 15"><circle cx="7.5" cy="7.5" r="6.5" fill="none" stroke="#5e5e5e" stroke-width="1.1"/><path d="M4.5 7.5L6.8 9.8L10.8 5.5" fill="none" stroke="#5e5e5e" stroke-width="1.2"/></svg>
</body></html>
